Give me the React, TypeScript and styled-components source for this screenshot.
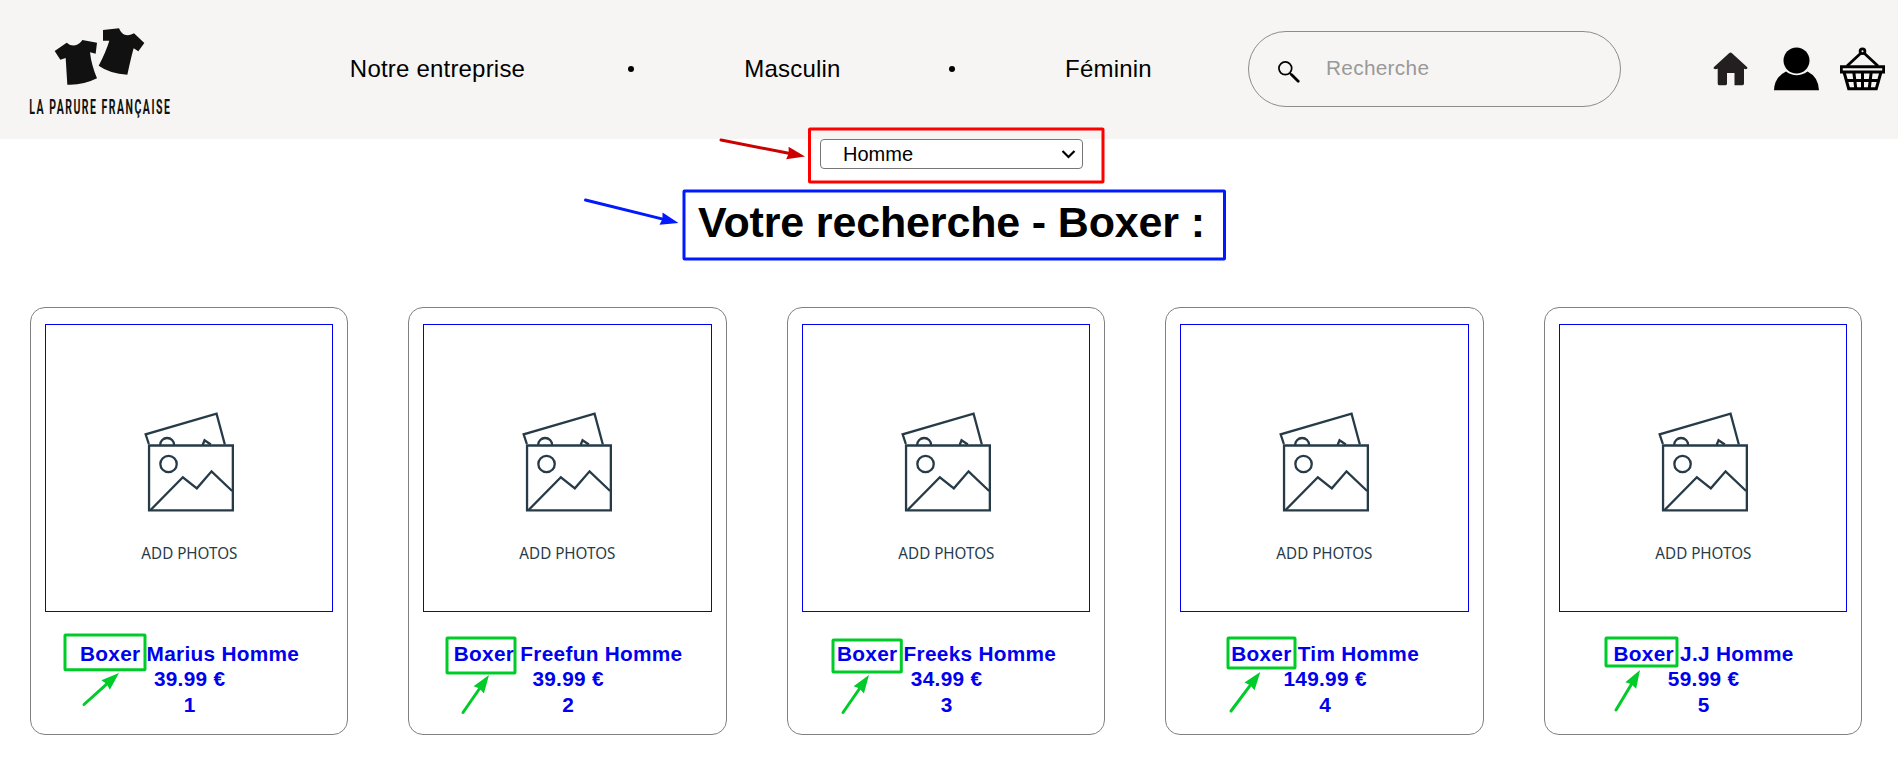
import React from 'react';
import styled, { createGlobalStyle } from 'styled-components';

const GlobalStyle = createGlobalStyle`
  *, *::before, *::after { box-sizing: border-box; }
  body {
    margin: 0;
    background: #fff;
    color: #000;
    font-family: Arial, "Liberation Sans", sans-serif;
    letter-spacing: 0.3px;
  }
`;

const Page = styled.div`
  position: relative;
  height: 761px;
  overflow: hidden;
`;

const Header = styled.header`
  display: flex;
  align-items: center;
  height: 139px;
  padding: 0 13px 1px 20px;
  background: #f6f5f3;
`;

const Logo = styled.svg`
  width: 160px;
  height: 116px;
  margin-top: 7px;
  flex: none;
  overflow: visible;
`;

const Nav = styled.nav`
  display: flex;
  align-items: center;
  flex: none;
  width: 804px;
  margin-left: 169px;
`;

const NavLink = styled.a<{ $width: number }>`
  flex: none;
  width: ${(p) => p.$width}px;
  font-size: 24px;
  line-height: 28px;
  letter-spacing: 0.2px;
  text-align: center;
  white-space: nowrap;
  color: #000;
`;

const Dot = styled.span<{ $before: number }>`
  width: 6px;
  height: 6px;
  margin: 0 110px 0 ${(p) => p.$before}px;
  border-radius: 50%;
  background: #000;
`;

const SearchBox = styled.label`
  display: flex;
  align-items: center;
  flex: none;
  width: 373px;
  height: 76px;
  margin-left: 95px;
  padding: 0 29px;
  border: 1px solid #8c8c8c;
  border-radius: 38px;
`;

const SearchIcon = styled.svg`
  flex: none;
  width: 22px;
  height: 22px;
  margin-top: 6px;
`;

const SearchInput = styled.input`
  flex: 1;
  min-width: 0;
  margin-left: 26px;
  padding: 0 0 2px;
  border: 0;
  outline: 0;
  background: transparent;
  font: 20.8px Arial, "Liberation Sans", sans-serif;
  letter-spacing: 0.3px;
  &::placeholder { color: #999; opacity: 1; }
`;

const Actions = styled.div`
  display: flex;
  align-items: center;
  gap: 21px;
  margin-left: auto;
`;

const ActionIcon = styled.svg<{ $w: number; $h: number; $gap?: number }>`
  width: ${(p) => p.$w}px;
  height: ${(p) => p.$h}px;
  margin-left: ${(p) => p.$gap ?? 0}px;
`;

const Filter = styled.div`
  display: flex;
  align-items: center;
  justify-content: space-between;
  width: 263px;
  height: 30px;
  margin: 0 auto 0 820px;
  padding: 0 6px 0 22px;
  border: 1px solid #767676;
  border-radius: 4px;
  background: #fff;
  font-size: 20px;
  line-height: 28px;
  letter-spacing: 0;
`;

const Title = styled.h1`
  margin: 28px 0 0;
  padding-left: 5px;
  font-size: 43px;
  line-height: 50px;
  text-align: center;
  letter-spacing: -0.15px;
`;

const Grid = styled.main`
  display: grid;
  grid-template-columns: repeat(5, 318.3px);
  column-gap: 60.2px;
  margin: 60px 0 0 30px;
`;

const Card = styled.article`
  height: 428px;
  padding: 16px 14px 0;
  border: 1px solid #808080;
  border-radius: 15px;
  color: #0000ee;
  text-align: center;
`;

const Photo = styled.svg`
  display: block;
  width: 100%;
  height: 288px;
  border: 1px solid #0000ee;
`;

const Info = styled.div`
  margin-top: 29px;
  padding-left: 1px;
  font-size: 20.8px;
  font-weight: bold;
  line-height: 25.33px;
  white-space: nowrap;
`;

const Annotations = styled.svg`
  position: absolute;
  inset: 0;
  width: 1898px;
  height: 761px;
  pointer-events: none;
`;

const products = [
  { name: 'Boxer Marius Homme', price: '39.99 €' },
  { name: 'Boxer Freefun Homme', price: '39.99 €' },
  { name: 'Boxer Freeks Homme', price: '34.99 €' },
  { name: 'Boxer Tim Homme', price: '149.99 €' },
  { name: 'Boxer J.J Homme', price: '59.99 €' },
];

const GREEN = '#00cc29';
const BLUE = '#0019ff';

// Each frame is [left, top, right, bottom, colour].
const frames: [number, number, number, number, string][] = [
  [809.5, 129, 1103, 182, '#ff0000'],
  [684, 191, 1224.5, 259, BLUE],
  [65, 635, 145, 669.7, GREEN],
  [447, 638, 515, 673, GREEN],
  [833, 640, 901.3, 672, GREEN],
  [1228, 638, 1295, 668, GREEN],
  [1606, 638, 1677, 666, GREEN],
];

// Each arrow is [tailX, tailY, tipX, tipY, colour].
const arrows: [number, number, number, number, string][] = [
  [721, 140, 805, 156.5, '#cc0000'],
  [585.5, 200, 678.5, 223, BLUE],
  [84, 704.5, 119, 673, GREEN],
  [463, 712.5, 489, 675, GREEN],
  [843, 712.5, 869, 675, GREEN],
  [1231, 711, 1260.3, 672, GREEN],
  [1616, 710, 1640, 670, GREEN],
];

function Arrow({ a }: { a: [number, number, number, number, string] }) {
  const [x1, y1, x2, y2, color] = a;
  const len = Math.hypot(x2 - x1, y2 - y1);
  const deg = (Math.atan2(y2 - y1, x2 - x1) * 180) / Math.PI;
  return (
    <g transform={`translate(${x1} ${y1}) rotate(${deg})`} fill={color} stroke={color}>
      <path d={`M0 0H${len - 14}`} strokeWidth="3" strokeLinecap="round" />
      <path d={`M${len} 0L${len - 18} -6.3L${len - 16.5} 0L${len - 18} 6.3Z`} stroke="none" />
    </g>
  );
}

function BrandLogo() {
  return (
    <Logo viewBox="0 0 480 348" fill="#111">
      <path d="M104 108L140 83Q150 93 166 91Q180 87 187 75L231 83L227 116L210 112Q214 150 231 190Q190 211 142 209L137 129L121 134Z" />
      <path d="M249 45L297 40Q305 59 318 60Q332 62 342 55L373 84L355 109L341 100Q335 120 322 179Q270 176 236 152Q258 110 268 77L249 77Z" />
      <text
        x="28"
        y="297"
        fontFamily="Roboto, sans-serif"
        fontSize="63"
        fontWeight="700"
        letterSpacing="9"
        textLength="426"
        lengthAdjust="spacingAndGlyphs"
      >
        LA PARURE FRANÇAISE
      </text>
    </Logo>
  );
}

function PhotoPlaceholder() {
  return (
    <Photo viewBox="0.3 0 286 286" fill="none" stroke="#263b47" strokeWidth="2.3">
      <path d="M103 119L99.8 109.3L170.7 88.7L179 119.5" />
      <path d="M114.3 120A7 7 0 0 1 128.3 120M156.8 120L158.7 115.3L165 119.5" />
      <path d="M103.2 120.5H187V185.3H103.2Z" />
      <circle cx="122.7" cy="139" r="8.2" />
      <path d="M104.7 185L137 152.3L151 163.3L165.7 146.3L186.3 166" />
      <text
        x="95.5"
        y="234"
        fill="#263b47"
        stroke="none"
        fontFamily="Noto Sans, Open Sans, sans-serif"
        fontSize="17"
        letterSpacing="0"
        textLength="96"
        lengthAdjust="spacingAndGlyphs"
      >
        ADD PHOTOS
      </text>
    </Photo>
  );
}

export default function App() {
  return (
    <Page>
      <GlobalStyle />
      <Header>
        <BrandLogo />
        <Nav>
          <NavLink $width={177}>Notre entreprise</NavLink>
          <Dot $before={102} />
          <NavLink $width={97}>Masculin</NavLink>
          <Dot $before={108} />
          <NavLink $width={87}>Féminin</NavLink>
        </Nav>
        <SearchBox>
          <SearchIcon viewBox="0 0 22 22" fill="none" stroke="#000">
            <circle cx="7.3" cy="7.3" r="6.4" strokeWidth="1.7" />
            <path d="M11.8 12.2L14 14.4" strokeWidth="1.8" />
            <path d="M13.7 13.7L20.2 20.2" strokeWidth="2.8" strokeLinecap="round" />
          </SearchIcon>
          <SearchInput placeholder="Recherche" />
        </SearchBox>
        <Actions>
          <ActionIcon $w={35} $h={34} viewBox="0 0 35 34" fill="#231f20">
            <path d="M17.5 0.5Q18.2 0.5 19 1.3L34 15Q35 16 34 16.8Q33 17.5 31 16.8V31.5Q31 33.2 29.5 33.2H21.5V21H14V31.8Q14 33.2 12.5 33.2H6Q4.7 33.2 4.7 31.5V16.8Q2 17.5 1 16.8Q0 16 1 15L16 1.3Q16.8 0.5 17.5 0.5Z" />
          </ActionIcon>
          <ActionIcon $w={45} $h={44} $gap={5} viewBox="0 0 45 44">
            <circle cx="22.5" cy="13.5" r="13" />
            <path d="M12 24.5Q22.5 32 33.5 24.5Q44.5 30 45 43.2H0Q0.5 30 12 24.5Z" />
          </ActionIcon>
          <ActionIcon $w={45} $h={44} viewBox="0 0 45 44" fill="none" stroke="#000">
            <circle cx="22.5" cy="4.3" r="2.4" strokeWidth="2.8" />
            <path d="M20.5 6.5L7 19M24.5 6.5L38 19" strokeWidth="2.8" />
            <path d="M1.3 19.8H43.7V25H1.3Z" strokeWidth="2.9" />
            <path d="M4 25L8.7 41.7H36.3L41 25M6 33.5H39" strokeWidth="3" />
            <path d="M13.8 25L15.8 42M22.5 25V42M31.2 25L29.2 42" strokeWidth="3" />
          </ActionIcon>
        </Actions>
      </Header>
      <Filter>
        Homme
        <svg width="15" height="10" viewBox="0 0 15 10" fill="none" stroke="#000" strokeWidth="2.2">
          <path d="M1.5 2L7.5 8L13.5 2" />
        </svg>
      </Filter>
      <Title>Votre recherche - Boxer :</Title>
      <Grid>
        {products.map((p, i) => (
          <Card key={p.name}>
            <PhotoPlaceholder />
            <Info>
              <div>{p.name}</div>
              <div>{p.price}</div>
              <div>{i + 1}</div>
            </Info>
          </Card>
        ))}
      </Grid>
      <Annotations>
        {frames.map(([l, t, r, b, color]) => (
          <rect
            key={`${l}`}
            x={l}
            y={t}
            width={r - l}
            height={b - t}
            rx="0.5"
            fill="none"
            stroke={color}
            strokeWidth="3"
          />
        ))}
        {arrows.map((a) => (
          <Arrow key={`${a[0]}`} a={a} />
        ))}
      </Annotations>
    </Page>
  );
}
